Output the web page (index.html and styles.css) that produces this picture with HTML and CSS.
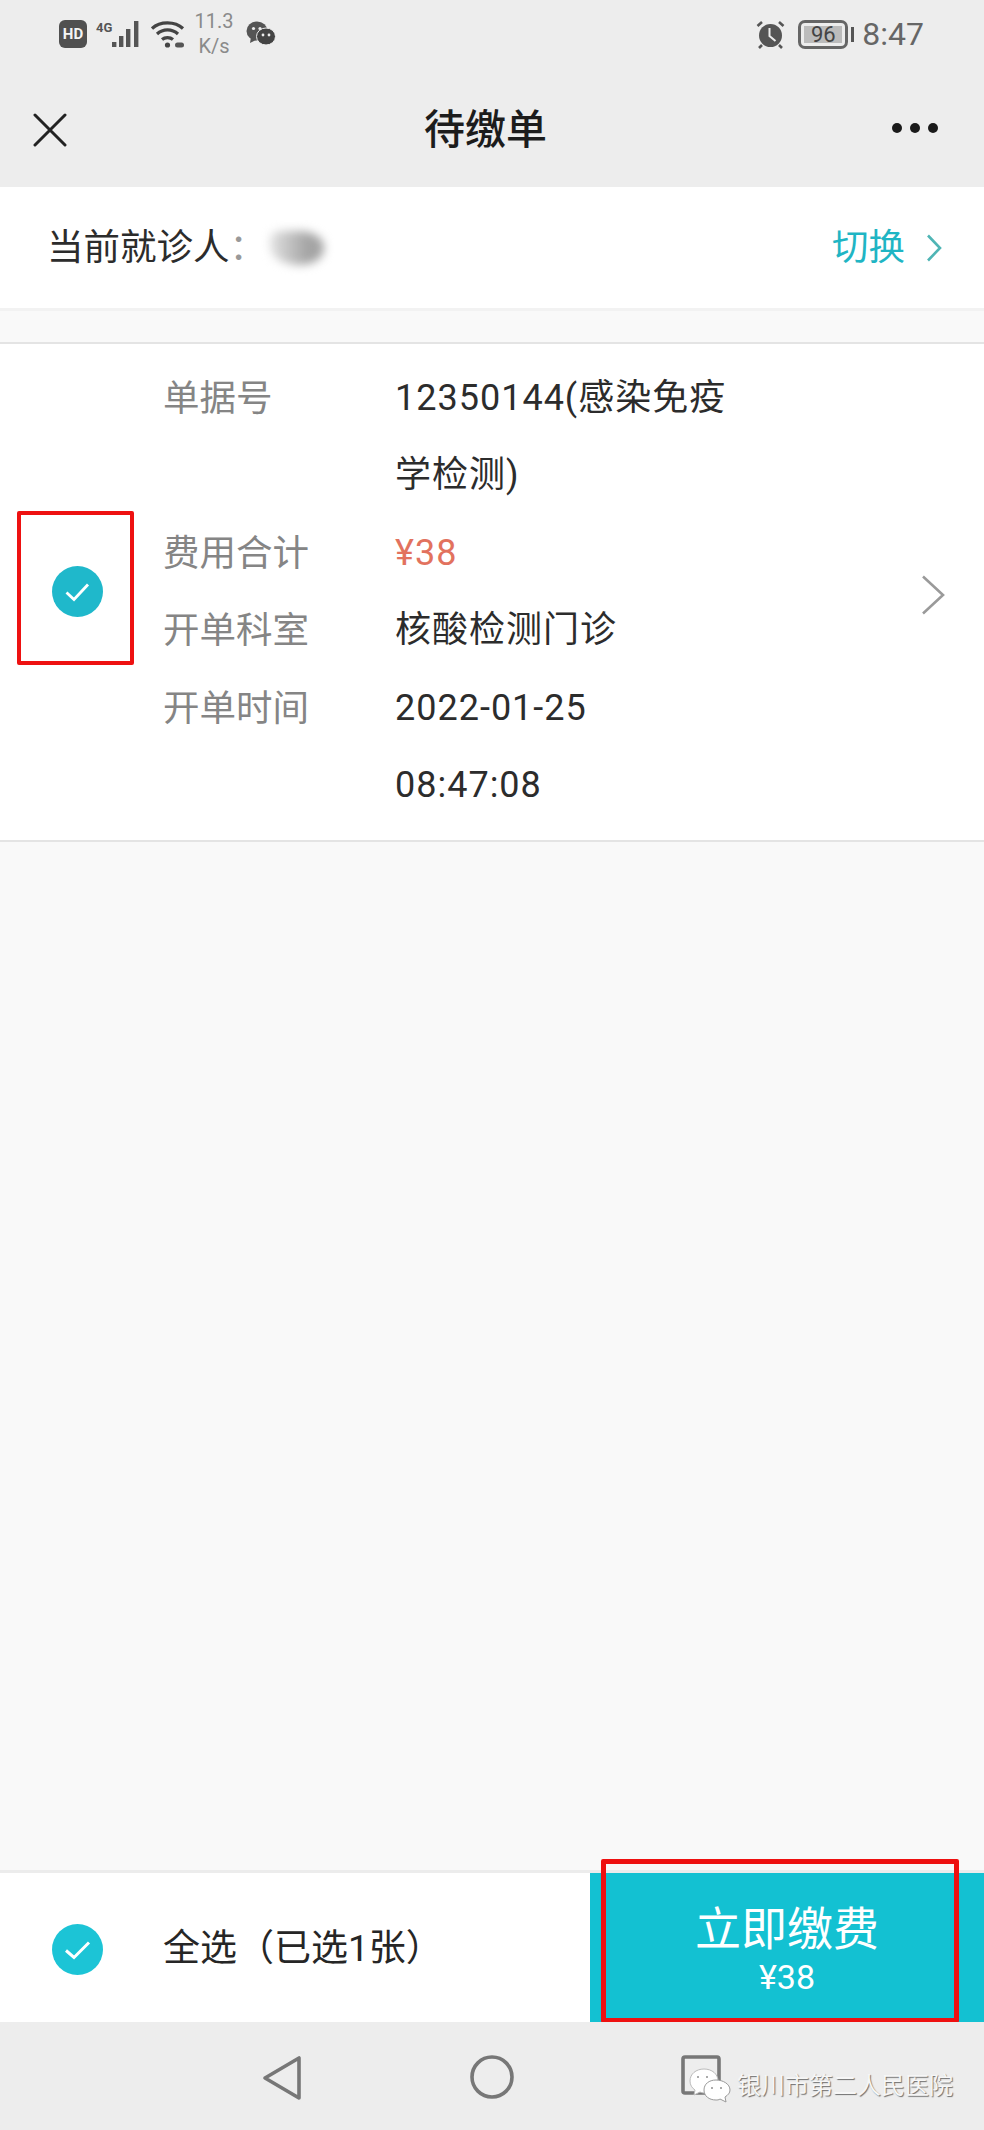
FILE: index.html
```html
<!DOCTYPE html>
<html lang="zh-CN">
<head>
<meta charset="utf-8">
<title>待缴单</title>
<link rel="stylesheet" href="styles.css">
</head>
<body>
<div class="page">
  <header class="top">
    <div class="status">
      <div class="status-left">
        <span class="hd">HD</span>
        <svg class="ic-signal" width="46" height="30" viewBox="0 0 46 30">
          <text x="0" y="13" class="net">4G</text>
          <rect x="16" y="23" width="4.4" height="5" fill="#555"/>
          <rect x="23" y="17" width="4.4" height="11" fill="#555"/>
          <rect x="30" y="10" width="4.4" height="18" fill="#555"/>
          <rect x="38" y="2" width="4.4" height="26" fill="#555"/>
        </svg>
        <svg class="ic-wifi" width="34" height="30" viewBox="0 0 34 30" fill="none" stroke="#444" stroke-width="3.2">
          <path d="M1 9.5C9 2 24 2 32 9.5"/>
          <path d="M6 15C12 9.5 21 9.5 27 15"/>
          <path d="M11 20.5C14 18 19 18 22 20.5"/>
          <circle cx="16.5" cy="26" r="2.6" fill="#444" stroke="none"/>
          <rect x="24" y="23.5" width="9" height="5" rx="2.5" fill="#555" stroke="none"/>
        </svg>
        <div class="speed"><span>11.3</span><span class="speed-unit">K/s</span></div>
        <svg class="ic-wechat" width="30" height="26" viewBox="0 0 30 26">
          <ellipse cx="11" cy="10" rx="10.5" ry="9.5" fill="#555"/>
          <path d="M5 16l-1 6 6-3z" fill="#555"/>
          <ellipse cx="20" cy="15.5" rx="9.5" ry="8.5" fill="#444" stroke="#ededed" stroke-width="1"/>
          <circle cx="7.5" cy="7.5" r="1.6" fill="#ededed"/>
          <circle cx="14" cy="7.5" r="1.6" fill="#ededed"/>
          <circle cx="17" cy="14" r="1.4" fill="#ededed"/>
          <circle cx="23" cy="14" r="1.4" fill="#ededed"/>
        </svg>
      </div>
      <div class="status-right">
        <svg class="ic-alarm" width="29" height="29" viewBox="0 0 29 29">
          <circle cx="14.5" cy="15.5" r="11.5" fill="#555"/>
          <path d="M13.5 8v8l6 5" fill="none" stroke="#ededed" stroke-width="2"/>
          <path d="M1.5 6L6 2M27.5 6L23 2M6 25l-3 3M23 25l3 3" stroke="#555" stroke-width="2.6" fill="none"/>
        </svg>
        <div class="battery">
          <div class="battery-body"><span class="battery-fill">96</span></div>
          <span class="battery-tip"></span>
        </div>
        <span class="clock">8:47</span>
      </div>
    </div>
    <nav class="navbar">
      <svg class="ic-close" width="34" height="34" viewBox="0 0 34 34" fill="none" stroke="#222" stroke-width="3" stroke-linecap="round">
        <path d="M2 2L32 32M32 2L2 32"/>
      </svg>
      <h1 class="title">待缴单</h1>
      <div class="more"><i></i><i></i><i></i></div>
    </nav>
  </header>

  <section class="patient">
    <div class="patient-name">
      <span>当前就诊人</span><span class="colon">：</span><span class="blurred"></span>
    </div>
    <div class="switch">
      <span>切换</span>
      <svg width="16" height="28" viewBox="0 0 16 28" fill="none" stroke="#4fb5b5" stroke-width="2.6">
        <path d="M2 1.5L14 14L2 26.5"/>
      </svg>
    </div>
  </section>

  <main class="list">
    <article class="bill">
      <div class="bill-check">
        <svg class="check" width="51" height="51" viewBox="0 0 51 51">
          <circle cx="25.5" cy="25.5" r="25.5" fill="#1fb8cb"/>
          <path d="M14.5 26.5L22 33.5L36 18.5" fill="none" stroke="#fff" stroke-width="2.8"/>
        </svg>
      </div>
      <dl class="fields">
        <dt>单据号</dt><dd>12350144(感染免疫学检测)</dd>
        <dt>费用合计</dt><dd class="price">¥38</dd>
        <dt>开单科室</dt><dd>核酸检测门诊</dd>
        <dt>开单时间</dt><dd>2022-01-25 08:47:08</dd>
      </dl>
      <svg class="bill-arrow" width="24" height="40" viewBox="0 0 24 40" fill="none" stroke="#9a9a9a" stroke-width="2.6">
        <path d="M2 1.5L22 20L2 38.5"/>
      </svg>
      <span class="mark mark-check"></span>
    </article>
  </main>

  <footer class="bottom">
    <div class="select-all">
      <svg class="check" width="51" height="51" viewBox="0 0 51 51">
        <circle cx="25.5" cy="25.5" r="25.5" fill="#1cc4d6"/>
        <path d="M14 26.5L22 33.5L37 18.5" fill="none" stroke="#fff" stroke-width="3"/>
      </svg>
      <span class="select-text">全选（已选1张）</span>
    </div>
    <div class="pay">
      <span class="pay-title">立即缴费</span>
      <span class="pay-amount">¥38</span>
      <span class="mark mark-pay"></span>
    </div>
  </footer>

  <div class="sysnav">
    <svg class="nav-back" width="40" height="46" viewBox="0 0 40 46" fill="none" stroke="#777" stroke-width="3.6" stroke-linejoin="round">
      <path d="M37 3V43L3 23Z"/>
    </svg>
    <svg class="nav-home" width="44" height="44" viewBox="0 0 44 44" fill="none" stroke="#777" stroke-width="3.6">
      <circle cx="22" cy="22" r="20"/>
    </svg>
    <svg class="nav-recent" width="40" height="40" viewBox="0 0 40 40" fill="none" stroke="#777" stroke-width="3.6">
      <rect x="2" y="2" width="36" height="36" rx="2"/>
    </svg>
    <div class="watermark">
      <svg width="42" height="36" viewBox="0 0 42 36">
        <path d="M15 1C7 1 1 6 1 13C1 17 3 20 6 22L5 27L11 24C13 25 15 25 17 25C25 25 29 19 29 13C29 6 23 1 15 1Z" fill="#fff" stroke="#bbb"/>
        <path d="M27 12C20 12 15 16 15 22C15 28 20 32 27 32C28 32 30 32 31 31L37 34L36 29C39 27 41 25 41 22C41 16 34 12 27 12Z" fill="#fff" stroke="#999"/>
        <path d="M9 8v2M18 8v2M23 19v2M32 19v2" stroke="#888" stroke-width="1.4"/>
      </svg>
      <span class="watermark-text">银川市第二人民医院</span>
    </div>
  </div>
</div>
</body>
</html>
```
FILE: styles.css
```css
* {
  box-sizing: border-box;
}

html,
body {
  margin: 0;
  padding: 0;
}

body {
  font-family: Roboto, "Noto Sans CJK SC", sans-serif;
  color: #2c2c2c;
  background: #f9f9f9;
}

.page {
  width: 984px;
  height: 2130px;
  display: flex;
  flex-direction: column;
  overflow: hidden;
}

.top {
  background: #ededed;
}

.status {
  height: 62px;
  padding: 6px 60px 0 59px;
  display: flex;
  align-items: center;
  justify-content: space-between;
}

.status-left,
.status-right {
  display: flex;
  align-items: center;
}

.hd {
  width: 28px;
  height: 28px;
  border-radius: 6px;
  background: #505050;
  color: #f4f4f4;
  font-size: 15px;
  font-weight: 700;
  line-height: 28px;
  text-align: center;
}

.ic-signal {
  margin-left: 9px;
}

.net {
  font-family: Roboto, sans-serif;
  font-size: 13px;
  font-weight: 700;
  fill: #555;
}

.ic-wifi {
  margin-left: 9px;
}

.speed {
  width: 40px;
  margin-left: 9px;
  display: flex;
  flex-direction: column;
  align-items: center;
  color: #8a8a8a;
  font-size: 20px;
  line-height: 25px;
}

.speed-unit {
  font-size: 20px;
}

.ic-wechat {
  margin-left: 12px;
}

.battery {
  margin-left: 13px;
  display: flex;
  align-items: center;
}

.battery-body {
  width: 50px;
  height: 29px;
  padding: 3px;
  border: 3px solid #666;
  border-radius: 7px;
}

.battery-fill {
  display: block;
  width: 38px;
  height: 17px;
  background: #bcbcbc;
  color: #444;
  font-size: 22px;
  line-height: 17px;
  text-align: center;
}

.battery-tip {
  width: 3px;
  height: 15px;
  margin-left: 3px;
  background: #555;
}

.clock {
  margin-left: 8px;
  color: #666;
  font-size: 32px;
  line-height: 36px;
}

.navbar {
  height: 125px;
  padding: 11px 46px 0 33px;
  display: grid;
  grid-template-columns: 1fr auto 1fr;
  align-items: center;
}

.title {
  margin: 0;
  color: #1c1c1c;
  font-size: 41px;
  font-weight: 500;
  line-height: 56px;
}

.more {
  margin-bottom: 5px;
  display: flex;
  justify-content: flex-end;
  gap: 8px;
}

.more i {
  width: 10px;
  height: 10px;
  border-radius: 50%;
  background: #1a1a1a;
}

.patient {
  height: 121px;
  padding: 0 42px 0 47px;
  background: #fff;
  display: flex;
  align-items: center;
  justify-content: space-between;
  font-size: 36.5px;
  line-height: 50px;
}

.patient-name {
  display: flex;
  align-items: center;
}

.colon {
  color: #999;
}

.blurred {
  width: 54px;
  height: 34px;
  margin-left: 4px;
  border-radius: 30% 60% 60% 70%;
  background: linear-gradient(90deg, #e2e2e2, #a4a4a4 70%);
  filter: blur(5px);
}

.switch {
  display: flex;
  align-items: center;
  gap: 21px;
  color: #1fb5c4;
}

.list {
  flex: 1;
  padding-top: 31px;
  border-top: 3px solid #f2f2f2;
  background: #f9f9f9;
}

.bill {
  position: relative;
  display: flex;
  align-items: center;
  height: 500px;
  border-top: 2px solid #e4e4e4;
  border-bottom: 2px solid #e4e4e4;
  background: #fff;
}

.bill-check {
  width: 163px;
  padding: 0 0 2px 52px;
  flex: none;
  display: flex;
}

.check {
  display: block;
  flex: none;
}

.fields {
  margin: 0;
  width: 572px;
  flex: none;
  display: grid;
  grid-template-columns: 232px 340px;
  font-size: 36.5px;
  line-height: 77.5px;
}

.fields dt {
  color: #858585;
}

.fields dd {
  margin: 0;
  color: #2c2c2c;
  font-size: 36px;
  letter-spacing: 1px;
}

.fields .price {
  color: #e2725e;
}

.bill-arrow {
  margin: 6px 0 0 186px;
  flex: none;
}

.mark {
  position: absolute;
  border: 4px solid #ee1111;
  border-radius: 2px;
}

.mark-check {
  left: 17px;
  top: 167px;
  width: 117px;
  height: 154px;
}

.bottom {
  height: 152px;
  border-top: 3px solid #ececec;
  background: #fff;
  display: flex;
}

.select-all {
  flex: 1;
  padding: 3px 0 0 52px;
  display: flex;
  align-items: center;
}

.select-text {
  margin-left: 60px;
  font-size: 37px;
  line-height: 50px;
  color: #262626;
}

.pay {
  position: relative;
  width: 394px;
  background: #13c1d2;
  color: #fff;
  display: flex;
  flex-direction: column;
  align-items: center;
  padding-top: 30px;
}

.pay-title {
  font-size: 46px;
  line-height: 52px;
}

.pay-amount {
  font-size: 34px;
  line-height: 44px;
}

.mark-pay {
  left: 11px;
  top: -14px;
  width: 358px;
  height: 164px;
  border-width: 5px;
}

.sysnav {
  position: relative;
  height: 108px;
  background: #ededed;
  padding-top: 33px;
  display: flex;
  align-items: flex-start;
}

.nav-back {
  margin-left: 262px;
}

.nav-home {
  margin-left: 168px;
}

.nav-recent {
  margin-left: 167px;
}

.watermark {
  position: absolute;
  left: 689px;
  top: 46px;
  display: flex;
  align-items: center;
  gap: 6px;
}

.watermark-text {
  color: #f6f6f6;
  font-size: 24px;
  line-height: 34px;
  white-space: nowrap;
  text-shadow: 1px 1px 1px #6f6f6f;
}
```
